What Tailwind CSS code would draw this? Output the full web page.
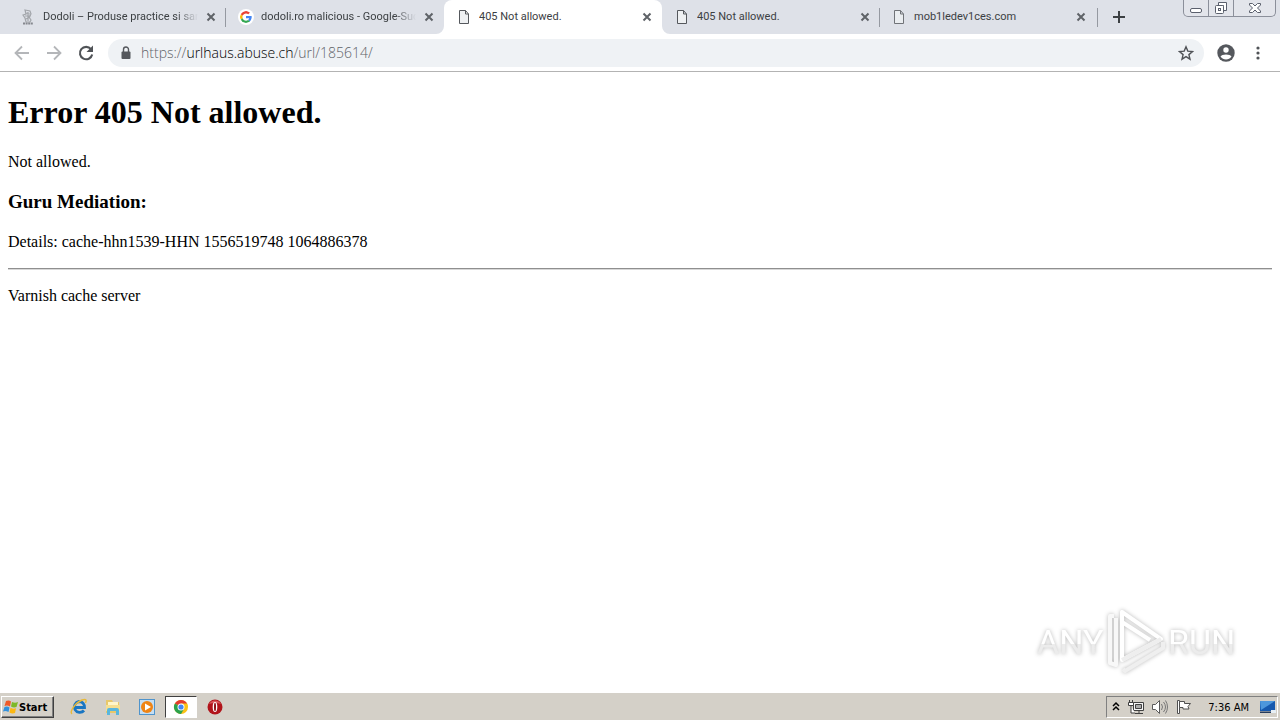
<!DOCTYPE html>
<html lang="en">
<head>
<meta charset="utf-8">
<title>405 Not allowed.</title>
<script src="https://cdn.jsdelivr.net/npm/@tailwindcss/browser@4"></script>
</head>
<body class="flex min-h-screen flex-col bg-white text-black">
<svg class="hidden" aria-hidden="true">
  <symbol id="close" viewBox="0 0 10 10"><path d="M1.5 1.5l7 7m0-7l-7 7" stroke="#5f6368" stroke-width="2" fill="none"/></symbol>
  <symbol id="doc" viewBox="0 0 16 16"><path d="M3.500 1.500h6l3 3.500v9.500h-9zM9.500 1.500v3.500h3" stroke="#55585d" stroke-width="1" fill="#eef0f2"/></symbol>
</svg>

<header class="font-['Open_Sans','Noto_Sans',sans-serif]">
  <div class="flex h-[34px] items-stretch bg-[#dee1e8] pl-2">
    <nav class="flex min-w-0 flex-1 font-['Roboto','Liberation_Sans',sans-serif] text-[11px] text-[#3c4043]" aria-label="Tabs">
      <div class="relative flex min-w-0 max-w-[218px] flex-1 items-center pr-2.5 pl-3">
        <svg class="size-4 shrink-0" viewBox="0 0 16 16" fill="none" stroke="#a2a5aa"><path d="M5 1l5 1 1 3-2 3 2 3-1 2H6L5 9 3 6l3-1zM6 4l4 1M5 7h6M6 10l4-2M8 3v9" stroke-width="1.200"/><path d="M3 14.500h10" stroke="#85888e" stroke-width="2" stroke-dasharray="2 .6"/></svg>
        <a href="#" class="ml-[7px] min-w-0 flex-1 overflow-hidden whitespace-nowrap [mask-image:linear-gradient(to_right,black_86%,transparent)]">Dodoli – Produse practice si sana</a>
        <button class="ml-2 size-2.5 shrink-0" aria-label="Close tab"><svg class="size-2.5"><use href="#close"/></svg></button>
        <span class="absolute top-2 right-0 h-[19px] w-px bg-[#9599a1]"></span>
      </div>
      <div class="flex min-w-0 max-w-[218px] flex-1 items-center pr-2.5 pl-3">
        <svg class="size-4 shrink-0 rounded-full bg-white p-0.5" viewBox="0 0 48 48"><path fill="#ea4335" d="M24 9.500c3.500 0 6.700 1.200 9.200 3.600l6.900-6.900C35.900 2.400 30.500 0 24 0 14.600 0 6.500 5.400 2.600 13.200l8 6.200C12.500 13.700 17.700 9.500 24 9.500z"/><path fill="#4285f4" d="M47 24.500c0-1.600-.2-3.100-.4-4.500H24v9h12.900c-.6 3-2.300 5.500-4.800 7.200l7.700 6C44.400 38 47 31.800 47 24.500z"/><path fill="#fbbc05" d="M10.500 28.600a14 14 0 010-9.200l-8-6.200a24 24 0 000 21.600z"/><path fill="#34a853" d="M24 48c6.500 0 11.900-2.100 15.900-5.800l-7.700-6c-2.200 1.500-4.900 2.300-8.200 2.300-6.300 0-11.600-4.200-13.500-9.900l-8 6.200C6.500 42.600 14.600 48 24 48z"/></svg>
        <a href="#" class="ml-[7px] min-w-0 flex-1 overflow-hidden whitespace-nowrap [mask-image:linear-gradient(to_right,black_86%,transparent)]">dodoli.ro malicious - Google-Suc</a>
        <button class="ml-2 size-2.5 shrink-0" aria-label="Close tab"><svg class="size-2.5"><use href="#close"/></svg></button>
      </div>
      <div class="relative flex min-w-0 max-w-[218px] flex-1 items-center rounded-t-lg bg-white pr-2.5 pl-3">
        <svg class="absolute bottom-0 -left-2 size-2" viewBox="0 0 8 8"><path fill="#fff" d="M8 0v8H0a8 8 0 008-8z"/></svg>
        <svg class="absolute -right-2 bottom-0 size-2" viewBox="0 0 8 8"><path fill="#fff" d="M0 0v8h8a8 8 0 01-8-8z"/></svg>
        <svg class="size-4 shrink-0"><use href="#doc"/></svg>
        <a href="#" aria-current="page" class="ml-[7px] min-w-0 flex-1 overflow-hidden whitespace-nowrap">405 Not allowed.</a>
        <button class="ml-2 size-2.5 shrink-0" aria-label="Close tab"><svg class="size-2.5"><use href="#close"/></svg></button>
      </div>
      <div class="relative flex min-w-0 max-w-[218px] flex-1 items-center pr-2.5 pl-3">
        <svg class="size-4 shrink-0"><use href="#doc"/></svg>
        <a href="#" class="ml-[7px] min-w-0 flex-1 overflow-hidden whitespace-nowrap">405 Not allowed.</a>
        <button class="ml-2 size-2.5 shrink-0" aria-label="Close tab"><svg class="size-2.5"><use href="#close"/></svg></button>
        <span class="absolute top-2 right-0 h-[19px] w-px bg-[#9599a1]"></span>
      </div>
      <div class="relative flex min-w-0 max-w-[218px] flex-1 items-center pr-3 pl-[11px]">
        <svg class="size-4 shrink-0 opacity-80"><use href="#doc"/></svg>
        <a href="#" class="ml-[7px] min-w-0 flex-1 overflow-hidden whitespace-nowrap">mob1ledev1ces.com</a>
        <button class="ml-2 size-2.5 shrink-0" aria-label="Close tab"><svg class="size-2.5"><use href="#close"/></svg></button>
        <span class="absolute top-2 right-0 h-[19px] w-px bg-[#9599a1]"></span>
      </div>
      <button class="ml-[14px] self-center" aria-label="New tab"><svg class="size-3.5" viewBox="0 0 14 14"><path d="M7 1v12M1 7h12" stroke="#3c4043" stroke-width="2"/></svg></button>
    </nav>
    <div class="mr-1 flex h-[17px] shrink-0 overflow-hidden rounded-b-[5px] border border-t-0 border-[#8b8f9a] bg-[#e3e5eb]">
      <button class="flex w-[25px] items-center justify-center border-r border-[#8b8f9a]" aria-label="Minimize"><svg class="h-4 w-4" viewBox="0 0 16 16"><rect x="2.500" y="8.500" width="11" height="4" rx="1.500" fill="#fff" stroke="#5b606d"/></svg></button>
      <button class="flex w-[25px] items-center justify-center border-r border-[#8b8f9a]" aria-label="Restore"><svg class="h-4 w-4" viewBox="0 0 16 16" fill="#fff" stroke="#5b606d"><path d="M5.500 2.500h8v8h-3v-5h-5z"/><rect x="2.500" y="5.500" width="8" height="8" rx="1"/><rect x="5.500" y="8.500" width="2" height="2"/></svg></button>
      <button class="flex w-[41px] items-center justify-center" aria-label="Close window"><svg class="h-4 w-4" viewBox="0 0 16 16"><path d="M2.500 3.500h3l2.500 2.500 2.500-2.500h3v1.500l-3 3 3 3v1.500h-3L8 10l-2.500 2.500h-3V11l3-3-3-3z" fill="#fff" stroke="#5b606d"/></svg></button>
    </div>
  </div>

  <div class="flex h-[38px] items-center border-b border-[#b3b3b3] bg-white pr-3 pl-3">
    <button class="mr-3 size-5" aria-label="Back"><svg viewBox="0 0 20 20" fill="none" stroke="#b4b6b9" stroke-width="1.800"><path d="M17 10H4m6-6.500L3.500 10l6.500 6.500"/></svg></button>
    <button class="mr-3 size-5" aria-label="Forward"><svg viewBox="0 0 20 20" fill="none" stroke="#b4b6b9" stroke-width="1.800"><path d="M3 10h13M10 3.500l6.500 6.500-6.500 6.500"/></svg></button>
    <button class="mr-3 size-5" aria-label="Reload"><svg viewBox="0 0 20 20"><path d="M15 6.200A6.200 6.200 0 1016.200 11.500" fill="none" stroke="#505357" stroke-width="2.100"/><path d="M17 2.500V9h-6.500z" fill="#505357"/></svg></button>
    <div class="relative flex h-7 min-w-0 flex-1 items-center rounded-full bg-[#eff2f5] pr-2.5 pl-2.5">
      <svg class="h-4 w-4 shrink-0" viewBox="0 0 16 16"><rect x="3.500" y="6.500" width="9" height="7.500" rx="1" fill="#55585d"/><path d="M5.500 7V4.500a2.500 2.500 0 015 0V7" fill="none" stroke="#55585d" stroke-width="1.400"/></svg>
      <div role="textbox" aria-label="Address" contenteditable="true" class="ml-[7px] flex-1 overflow-hidden text-[14px] leading-5 font-light whitespace-nowrap text-[#5f6368]">https://<span class="text-black">urlhaus.abuse.ch</span>/url/185614/</div>
      <button class="size-4 shrink-0" aria-label="Bookmark this page"><svg viewBox="0 0 16 16"><path d="M8 1.800l1.800 4.300 4.700.4-3.600 3.100 1.100 4.600L8 11.700l-4 2.500 1.100-4.600L1.500 6.500l4.700-.4z" fill="none" stroke="#505357" stroke-width="1.400"/></svg></button>
    </div>
    <button class="ml-3 size-5 shrink-0" aria-label="Profile"><svg viewBox="0 0 20 20"><circle cx="10" cy="10" r="8.700" fill="#55585d"/><circle cx="10" cy="7" r="2.700" fill="#fff"/><path d="M4.500 13.500c1-2.800 10-2.800 11 0-2.500 4-8.500 4-11 0z" fill="#fff"/></svg></button>
    <button class="ml-3 h-5 w-5 shrink-0" aria-label="Menu"><svg viewBox="0 0 20 20" fill="#505357"><circle cx="10" cy="5" r="1.600"/><circle cx="10" cy="10" r="1.600"/><circle cx="10" cy="15" r="1.600"/></svg></button>
  </div>
</header>

<main class="relative flex-1 px-2 pt-[22px] font-['Liberation_Serif',serif] text-base leading-[18px]">
  <h1 class="text-[32px] leading-[37px] font-bold">Error 405 Not allowed.</h1>
  <p class="mt-[22px]">Not allowed.</p>
  <h3 class="mt-5 text-[19px] leading-[22px] font-bold">Guru Mediation:</h3>
  <p class="mt-5">Details: cache-hhn1539-HHN 1556519748 1064886378</p>
  <hr class="mt-[17px] h-0.5 border-t border-b border-t-[#8f8f8f] border-b-[#d8d8d8]">
  <p class="mt-[17px]">Varnish cache server</p>

  <div class="absolute right-[42px] bottom-[17px] h-[70px] w-[204px]">
    <svg class="size-full drop-shadow-[0_0_2px_#b8b8b8]" viewBox="0 0 204 70" role="img" aria-label="ANY RUN">
      <defs><linearGradient id="fade" x1="0" y1="0" x2="0" y2="1"><stop offset=".55" stop-color="#fff"/><stop offset=".55" stop-color="#ececec"/></linearGradient></defs>
      <g fill="url(#fade)" font-family="Liberation Sans Narrow, Roboto, sans-serif" font-size="34">
        <text x="3" y="48">ANY</text>
        <text x="134" y="48">RUN</text>
      </g>
      <g fill="none" stroke-linejoin="round" stroke-width="4">
        <path d="M89 63l2 2 38-23v-6" stroke="#efefef"/>
        <path d="M80 10h-4v47l6 2V12" stroke="#f8f8f8"/>
        <path d="M88 6v48l39-21zM88 16l28 18" stroke="#fff"/>
        <path d="M88 54l39-21" stroke="#eeeeee"/>
      </g>
    </svg>
  </div>
</main>

<footer class="flex h-[27px] items-center border-t border-[#d4d0c8] bg-[#d4d0c8] pr-0.5 pl-px font-['DejaVu_Sans_Condensed','DejaVu_Sans',sans-serif] text-[11px] text-black">
  <button class="flex h-[22px] w-[53px] items-center border border-t-white border-r-[#404040] border-b-[#404040] border-l-white pl-px font-bold shadow-[inset_-1px_-1px_#808080]">
    <svg class="size-4 shrink-0" viewBox="0 0 16 16"><path d="M3 2q3-1 5 .5L7 7.500Q4.500 6 1.500 7z" fill="#ef5a28"/><path d="M9 3q3 1.500 6 0l-1.500 5q-3 1-5.500-.5z" fill="#7db928"/><path d="M1.500 8q3-1 5 .5L5.500 13q-3-1.500-5.500-.5z" fill="#3191dd"/><path d="M7.500 8.800q3 1.500 5.500.4L12 14q-3 1-5.500-.5z" fill="#fcb813"/></svg>
    <span class="pt-0.5">Start</span>
  </button>
  <nav class="ml-[9px] flex items-center gap-0.5" aria-label="Quick launch">
    <button class="flex h-[22px] w-8 items-center justify-center" aria-label="Internet Explorer"><svg class="size-[18px]" viewBox="0 0 18 18" fill="none"><path d="M14 12.500A5.500 5.500 0 119 3.500c3.500 0 5.500 2.500 5.500 6H5" stroke="#1a76c2" stroke-width="2.800"/><path d="M2 16c-3-2 3-11 10-14 4-1.500 5 0 3.500 3" stroke="#e8b93a" stroke-width="1.500"/></svg></button>
    <button class="flex h-[22px] w-8 items-center justify-center" aria-label="File explorer"><svg class="size-[18px]" viewBox="0 0 18 18"><path d="M2 2h6l1 2h6v11H2z" fill="#e8c86a"/><path d="M4 4h10v5H4z" fill="#fff6c9"/><path d="M2 7h14v6H2z" fill="#f5df91"/><path d="M3 17v-5q0-2 2-2h8q2 0 2 2v5h-3v-4H6v4z" fill="#59b6dd"/></svg></button>
    <button class="flex h-[22px] w-8 items-center justify-center" aria-label="Media player"><svg class="size-[18px]" viewBox="0 0 18 18"><rect x="1.500" y="1.500" width="15" height="15" fill="#c5def3" stroke="#4f94cc"/><circle cx="9" cy="9" r="6" fill="#ef8415"/><path d="M7 5.500v7L13 9z" fill="#fff"/></svg></button>
    <button class="flex h-[22px] w-8 items-center justify-center border border-t-[#404040] border-r-white border-b-white border-l-[#404040] bg-white" aria-label="Google Chrome"><svg class="size-4" viewBox="0 0 16 16"><circle cx="8" cy="8" r="7" fill="#fbc116"/><path d="M8 8L1.900 4.500A7 7 0 0114.100 4.500z" fill="#e33b2e"/><path d="M8 8L1.900 4.500A7 7 0 008 15l3-5z" fill="#2ba24c"/><path d="M8 4.500h6.100L15 8H8z" fill="#fbc116"/><circle cx="8" cy="8" r="3.500" fill="#fff"/><circle cx="8" cy="8" r="2.600" fill="#4285f4"/></svg></button>
    <button class="flex h-[22px] w-8 items-center justify-center" aria-label="Opera"><svg class="size-4" viewBox="0 0 16 16"><circle cx="8" cy="8" r="7.500" fill="#b1141b"/><path d="M2 5a7 7 0 0112 0q-6-2-12 0z" fill="#d9575b"/><ellipse cx="8" cy="8" rx="2.300" ry="5" fill="#fff"/><ellipse cx="8" cy="8" rx="1" ry="4.200" fill="#8c1016"/></svg></button>
  </nav>
  <div class="ml-auto flex h-[22px] items-center border border-t-[#808080] border-r-white border-b-white border-l-[#808080] pl-1">
    <button class="h-4 w-2.5" aria-label="Show hidden icons"><svg viewBox="0 0 10 16" fill="none" stroke="#000" stroke-width="1.500"><path d="M2 7l3-3 3 3M2 11l3-3 3 3"/></svg></button>
    <svg class="ml-1.5 h-4 w-[18px]" viewBox="0 0 18 16" stroke="#404040"><path d="M6.500 3.500h10v8h-10z" fill="#f5f5f5"/><path d="M8.500 5.500h6v4h-6z" fill="#aaa"/><path d="M8 14.500h8M12 12v2" fill="none"/><path d="M1.500 3.500h5v3h-5zM2.500 1v2M5.500 1v2M4 7v7h4" fill="#fff"/></svg>
    <svg class="ml-1.5 h-4 w-[18px]" viewBox="0 0 18 16" fill="none" stroke="#5a5a5a"><path d="M1.500 5.500h3l4-4v13l-4-4h-3z" fill="#fff"/><path d="M10.500 5q2 3 0 6M12.500 3q4 5 0 10M14.500 1.500q4 6.500 0 13" stroke="#777"/></svg>
    <svg class="ml-1.5 h-4 w-[18px]" viewBox="0 0 18 16" stroke="#505050"><path d="M2.500 1.500h2v13h-2z" fill="#fff"/><path d="M4.500 2.500h5v2h6l-2.500 3 1 2.500h-6V8.500H4.500z" fill="#fff"/></svg>
    <time class="ml-[15px] pt-0.5">7:36 AM</time>
    <svg class="ml-2.5 h-4 w-[18px]" viewBox="0 0 18 16"><path d="M1 2h15v10H1z" fill="#1659ae"/><path d="M1 2h15L2 11z" fill="#4d97dc"/><path d="M1 12.500h15v1.500H1z" fill="#263c5d"/><path d="M12 11h5v3h-5z" fill="#e7eff5"/></svg>
  </div>
</footer>
</body>
</html>
